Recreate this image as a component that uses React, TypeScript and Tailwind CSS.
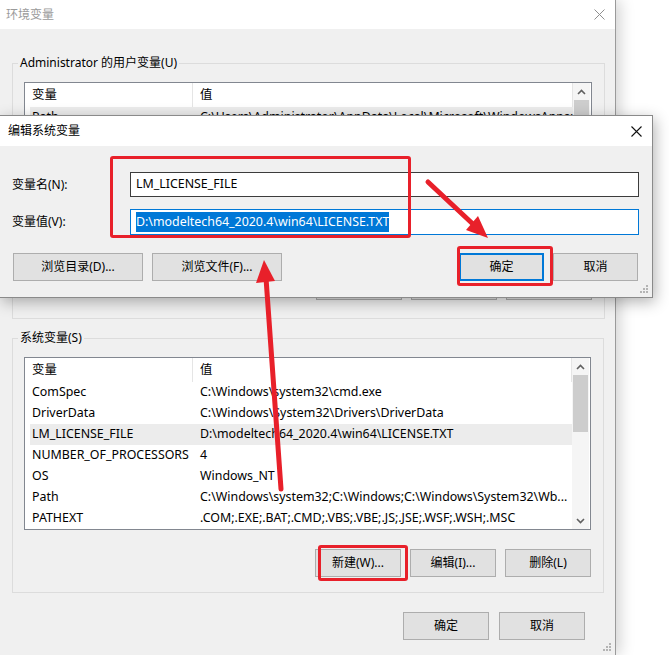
import React from "react";

type EnvVar = {
	name: string;
	value: string;
	selected?: boolean;
};

const systemVars: EnvVar[] = [
	{ name: "ComSpec", value: "C:\\Windows\\system32\\cmd.exe" },
	{ name: "DriverData", value: "C:\\Windows\\System32\\Drivers\\DriverData" },
	{
		name: "LM_LICENSE_FILE",
		value: "D:\\modeltech64_2020.4\\win64\\LICENSE.TXT",
		selected: true,
	},
	{ name: "NUMBER_OF_PROCESSORS", value: "4" },
	{ name: "OS", value: "Windows_NT" },
	{
		name: "Path",
		value: "C:\\Windows\\system32;C:\\Windows;C:\\Windows\\System32\\Wb...",
	},
	{ name: "PATHEXT", value: ".COM;.EXE;.BAT;.CMD;.VBS;.VBE;.JS;.JSE;.WSF;.WSH;.MSC" },
];

// only the first row peeks out above the edit dialog
const userVars: EnvVar[] = [
	{
		name: "Path",
		value: "C:\\Users\\Administrator\\AppData\\Local\\Microsoft\\WindowsApps;",
		selected: true,
	},
];

function WinButton({
	label,
	className = "",
	focused = false,
}: {
	label: string;
	className?: string;
	focused?: boolean;
}) {
	return (
		<button
			className={
				"h-[28px] bg-[#e1e1e1] text-[12px] text-black flex items-center justify-center " +
				(focused ? "border-2 border-[#0078d7] " : "border border-[#adadad] ") +
				className
			}
		>
			{label}
		</button>
	);
}

function Chevron({ up }: { up: boolean }) {
	return (
		<svg width="9" height="6" viewBox="0 0 9 6">
			<polyline
				points={up ? "1,5 4.5,1.5 8,5" : "1,1 4.5,4.5 8,1"}
				fill="none"
				stroke="#606060"
				strokeWidth="1.6"
			/>
		</svg>
	);
}

function Grip() {
	return (
		<svg width="9" height="9" viewBox="0 0 9 9" className="absolute right-[3px] bottom-[3px]">
			<rect x="6" y="0" width="2" height="2" fill="#b4b4b4" />
			<rect x="3" y="3" width="2" height="2" fill="#b4b4b4" />
			<rect x="6" y="3" width="2" height="2" fill="#b4b4b4" />
			<rect x="0" y="6" width="2" height="2" fill="#b4b4b4" />
			<rect x="3" y="6" width="2" height="2" fill="#b4b4b4" />
			<rect x="6" y="6" width="2" height="2" fill="#b4b4b4" />
		</svg>
	);
}

function VarList({ rows, height }: { rows: EnvVar[]; height: string }) {
	return (
		<div className={"flex border border-[#828790] bg-white text-[12.4px] " + height}>
			<div className="flex-1 min-w-0 overflow-hidden">
				<div className="flex h-[24px] items-center">
					<div className="w-[168px] h-full pl-[7px] flex items-center border-r border-[#e5e5e5]">
						变量
					</div>
					<div className="flex-1 h-full pl-[7px] flex items-center border-r border-[#e5e5e5]">
						值
					</div>
				</div>
				{rows.map((row) => (
					<div
						key={row.name}
						className={
							"flex h-[21px] items-center ml-[5px] " +
							(row.selected ? "bg-[#ececec]" : "")
						}
					>
						<div className="w-[163px] pl-[2px] truncate">{row.name}</div>
						<div className="flex-1 pl-[7px] whitespace-nowrap overflow-hidden">
							{row.value}
						</div>
					</div>
				))}
			</div>
			<div className="w-[17px] mr-[1px] flex flex-col bg-[#f5f5f5]">
				<div className="h-[17px] flex items-center justify-center">
					<Chevron up />
				</div>
				<div className="h-[57px] mx-[1px] bg-[#cdcdcd]" />
				<div className="flex-1" />
				<div className="h-[17px] flex items-center justify-center">
					<Chevron up={false} />
				</div>
			</div>
		</div>
	);
}

export default function App() {
	return (
		<div className="relative w-[669px] h-[655px] overflow-hidden bg-white text-[12px] text-black font-['Noto_Sans','Noto_Sans_CJK_SC',sans-serif]">
			{/* 环境变量 window */}
			<div className="relative w-[616px] h-[655px] bg-[#f0f0f0] border-r border-[#9a9a9a] shadow-[4px_0_14px_rgba(0,0,0,0.18)]">
				<div className="h-[29px] bg-white flex items-center justify-between">
					<span className="pl-[6px] text-[#9a9a9a]">环境变量</span>
					<svg width="11" height="11" viewBox="0 0 11 11" className="mr-[10px]">
						<path d="M0.5 0.5 L10.5 10.5 M10.5 0.5 L0.5 10.5" stroke="#8f8f8f" strokeWidth="1" />
					</svg>
				</div>

				<fieldset className="mt-[26px] ml-[12px] w-[592px] border border-[#dcdcdc] pl-[11px] pr-[12px] pt-[11px] pb-[18px]">
					<legend className="ml-[-6px] px-[2px] leading-[16px]">
						Administrator 的用户变量(U)
					</legend>
					<VarList rows={userVars} height="h-[171px]" />
					<div className="mt-[19px] flex justify-end gap-[9px]">
						<WinButton label="新建(N)..." className="w-[86px]" />
						<WinButton label="编辑(E)..." className="w-[86px]" />
						<WinButton label="删除(D)" className="w-[86px]" />
					</div>
				</fieldset>

				<fieldset className="mt-[11px] ml-[12px] w-[592px] border border-[#dcdcdc] pl-[11px] pr-[12px] pt-[11px] pb-[15px]">
					<legend className="ml-[-6px] px-[2px] leading-[16px]">系统变量(S)</legend>
					<VarList rows={systemVars} height="h-[173px]" />
					<div className="mt-[19px] flex justify-end gap-[9px]">
						<WinButton label="新建(W)..." className="w-[86px]" />
						<WinButton label="编辑(I)..." className="w-[86px]" />
						<WinButton label="删除(L)" className="w-[86px]" />
					</div>
				</fieldset>

				<div className="mt-[19px] flex justify-end gap-[10px] pr-[30px]">
					<WinButton label="确定" className="w-[86px]" />
					<WinButton label="取消" className="w-[86px]" />
				</div>
				<Grip />
			</div>

			{/* 编辑系统变量 dialog */}
			<div className="absolute left-0 top-[115px] w-[653px] h-[183px] bg-[#f0f0f0] border-y border-r border-[#8a8a8a] shadow-[2px_4px_14px_rgba(0,0,0,0.3)]">
				<div className="h-[30px] bg-white flex items-center justify-between">
					<span className="pl-[8px]">编辑系统变量</span>
					<svg width="11" height="11" viewBox="0 0 11 11" className="mr-[10px]">
						<path d="M0.5 0.5 L10.5 10.5 M10.5 0.5 L0.5 10.5" stroke="#111" strokeWidth="1.1" />
					</svg>
				</div>
				<div className="pt-[26px] pl-[12px] pr-[13px]">
					<div className="flex items-center">
						<span className="w-[118px]">变量名(N):</span>
						<div className="flex-1 h-[25px] bg-white border border-[#3c3c3c] flex items-center pl-[5px] text-[12.4px]">
							LM_LICENSE_FILE
						</div>
					</div>
					<div className="flex items-center mt-[12px]">
						<span className="w-[118px]">变量值(V):</span>
						<div className="flex-1 h-[26px] bg-white border border-[#0078d7] flex items-center pl-[5px] text-[12.4px]">
							<span className="bg-[#0078d7] text-white leading-[20px]">
								D:\modeltech64_2020.4\win64\LICENSE.TXT
							</span>
						</div>
					</div>
				</div>
				<div className="mt-[18px] flex pl-[13px] pr-[14px]">
					<WinButton label="浏览目录(D)..." className="w-[130px]" />
					<WinButton label="浏览文件(F)..." className="w-[130px] ml-[9px]" />
					<div className="flex-1" />
					<WinButton label="确定" className="w-[85px]" focused />
					<WinButton label="取消" className="w-[85px] ml-[9px]" />
				</div>
				<Grip />
			</div>

			{/* annotations */}
			<div className="absolute left-[110px] top-[156px] w-[301px] h-[82px] border-[3px] border-[#e8202a] rounded-[3px]" />
			<div className="absolute left-[457px] top-[246px] w-[96px] h-[40px] border-[3px] border-[#e8202a] rounded-[3px]" />
			<div className="absolute left-[318px] top-[545px] w-[90px] h-[36px] border-[3px] border-[#e8202a] rounded-[3px]" />
			<svg className="absolute left-0 top-0" width="669" height="655" viewBox="0 0 669 655">
				<line x1="428" y1="182" x2="475" y2="226" stroke="#e8202a" strokeWidth="5" strokeLinecap="round" />
				<polygon points="488,238 466,230 478,216" fill="#e8202a" />
				<line x1="281" y1="489" x2="266" y2="278" stroke="#e8202a" strokeWidth="5" strokeLinecap="round" />
				<polygon points="264,260 256,283 275,281" fill="#e8202a" />
			</svg>
		</div>
	);
}
